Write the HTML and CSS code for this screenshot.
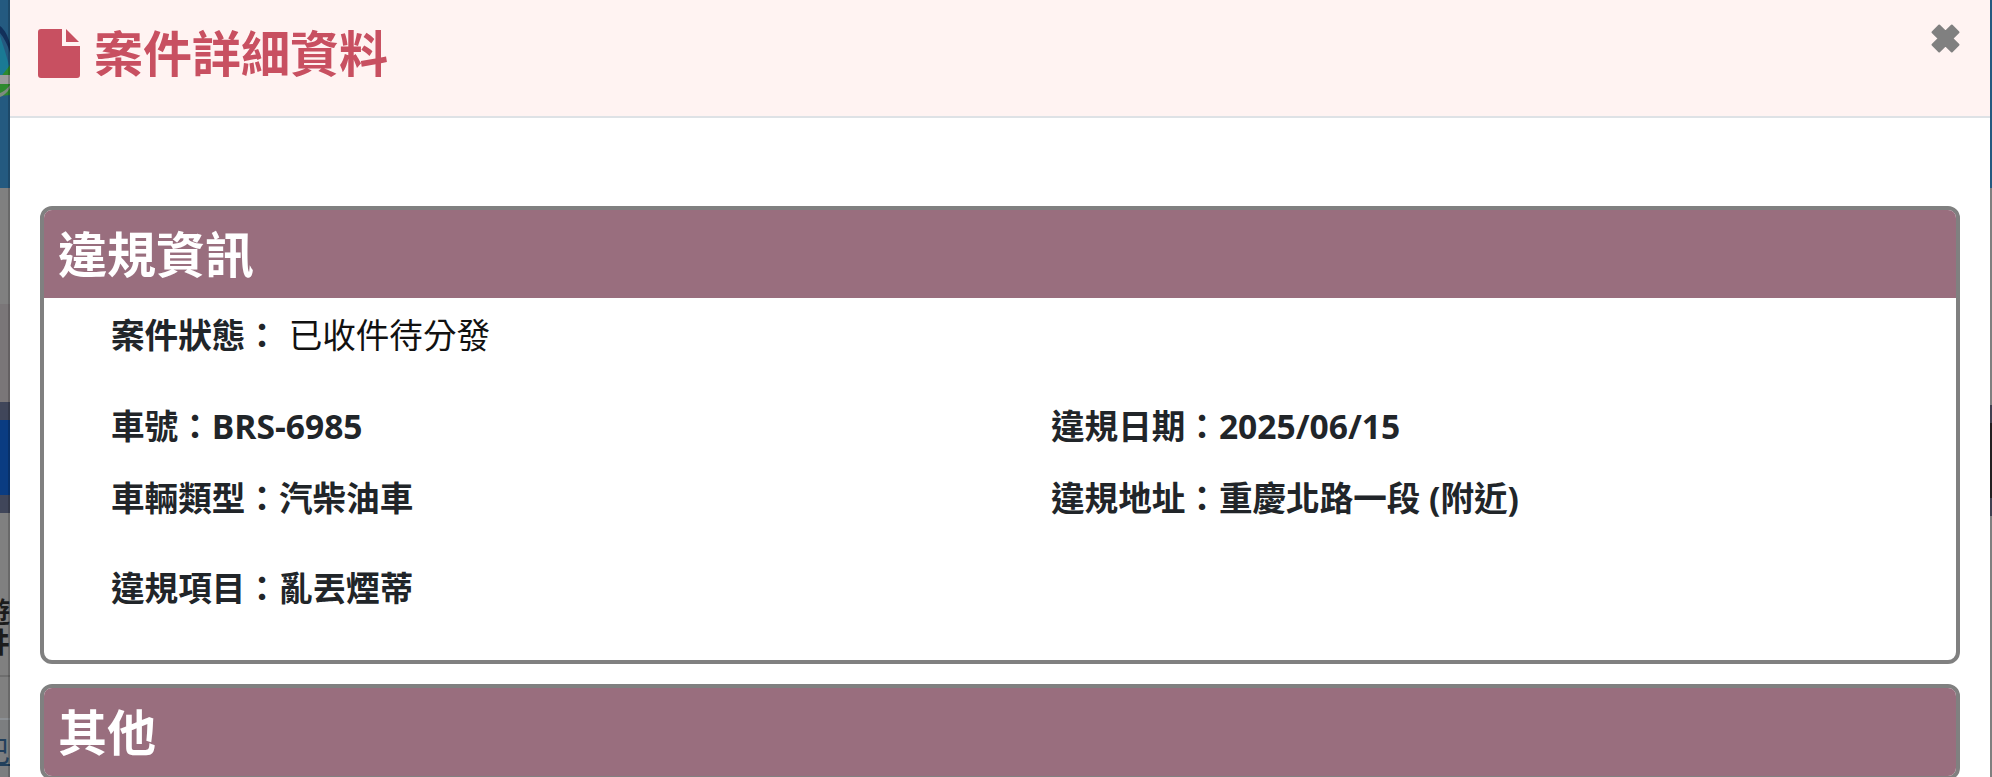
FILE: index.html
```html
<!DOCTYPE html>
<html lang="zh-Hant">
<head>
  <meta charset="UTF-8">
  <meta name="viewport" content="width=device-width, initial-scale=1.0">
  <title>案件詳細資料</title>
  <link rel="stylesheet" href="styles.css">
</head>
<body>
  <div class="strip strip-left">
    <div class="band band-blue">
      <svg class="logo-bit" width="10" height="100" viewBox="0 0 10 100">
        <path d="M0 36C4 48 8 60 10 70V72C7 82 3 90 0 96Z" fill="#1a7a95"/>
        <path d="M0 26C5 30 8 36 10 44V53C8 45 4 38 0 33Z" fill="#12305a"/>
        <path d="M10 65V95L0 96V78C3 74 7 69 10 65Z" fill="#2e8a2e"/>
        <path d="M0 75H10V84H0Z" fill="#9c9c9c"/>
        <path d="M0 93C3 92 6 90 10 85V88C7 93 3 96 0 97Z" fill="#7d8a80"/>
      </svg>
    </div>
    <div class="band band-gray"></div>
    <div class="band band-gray2"></div>
    <div class="band band-slate"></div>
    <div class="band band-navy"></div>
    <div class="band band-slate"></div>
    <div class="band band-text"><span class="clip-text">遊</span><span class="clip-text">井</span></div>
    <div class="band band-mid"></div>
    <div class="band band-link"><span class="clip-link">巴</span></div>
  </div>

  <div class="modal">
    <div class="modal-header">
      <h1 class="modal-title">
        <svg class="file-icon" viewBox="0 0 42 49">
          <path d="M3 0H24V17H42V46C42 48 41 49 39 49H3C1 49 0 48 0 46V3C0 1 1 0 3 0Z"/>
          <path d="M28 0 41 13H28Z"/>
        </svg>
        案件詳細資料
      </h1>
      <svg class="close-icon" viewBox="0 0 29 29">
        <path d="M8.200 1.500 14.500 7.800 20.800 1.500 27.500 8.200 21.200 14.500 27.500 20.800 20.800 27.500 14.500 21.200 8.200 27.500 1.500 20.800 7.800 14.500 1.500 8.200Z"/>
      </svg>
    </div>

    <div class="modal-body">
      <section class="card">
        <h2 class="card-title">違規資訊</h2>
        <div class="card-body">
          <p class="status">案件狀態： <span class="status-value">已收件待分發</span></p>
          <div class="info-grid">
            <p>車號：BRS-6985</p>
            <p>違規日期：2025/06/15</p>
            <p>車輛類型：汽柴油車</p>
            <p>違規地址：重慶北路一段 (附近)</p>
          </div>
          <p class="violation">違規項目：亂丟煙蒂</p>
        </div>
      </section>

      <section class="card">
        <h2 class="card-title">其他</h2>
      </section>
    </div>
  </div>

  <div class="strip strip-right">
    <div class="rband rband-blue"></div>
    <div class="rband rband-gray"></div>
    <div class="rband rband-slate"></div>
    <div class="rband rband-dark"></div>
    <div class="rband rband-slate"></div>
    <div class="rband rband-rest"></div>
  </div>
</body>
</html>
```
FILE: styles.css
```css
* {
  box-sizing: border-box;
}
html, body {
  margin: 0;
  height: 777px;
  overflow: hidden;
}
body {
  display: flex;
  font-family: "Open Sans", "Noto Sans CJK TC", sans-serif;
  color: #212529;
  background: #fff;
}

/* page behind the dialog, only the edges show */
.strip {
  flex: none;
  height: 777px;
  overflow: hidden;
}
.strip-left {
  width: 10px;
  position: relative;
}
.strip-left::after {
  content: "";
  position: absolute;
  top: 0;
  right: 0;
  bottom: 0;
  width: 2px;
  background: rgba(0, 0, 0, 0.18);
}
.strip-right {
  width: 2px;
}
.band-blue {
  height: 188px;
  background: #245a80;
}
.logo-bit {
  display: block;
}
.band-gray {
  height: 116px;
  background: #808080;
}
.band-gray2 {
  height: 98px;
  background: #7a7678;
}
.band-slate {
  height: 18px;
  background: #40465a;
}
.band-navy {
  height: 75px;
  background: #0a3c82;
}
.band-text {
  height: 164px;
  background: #808080;
  border-bottom: 2px solid #6e6e6e;
  padding-top: 84px;
  direction: rtl;
}
.band-mid {
  height: 43px;
  background: #808080;
  border-bottom: 2px solid #8c9094;
}
.band-link {
  height: 57px;
  background: #7c7e80;
  padding-top: 16px;
  direction: rtl;
}
.clip-text, .clip-link {
  display: block;
  width: 38px;
  height: 30px;
  margin-left: -28px;
  overflow: hidden;
  font-size: 28px;
  line-height: 30px;
}
.clip-text {
  font-weight: 700;
  color: #1c1c1c;
}
.clip-link {
  color: #22405c;
  text-decoration: underline;
}
.rband-blue {
  height: 188px;
  background: #245a80;
}
.rband-gray {
  height: 217px;
  background: #7f7f7f;
}
.rband-slate {
  height: 18px;
  background: #404050;
}
.rband-dark {
  height: 75px;
  background: #231f20;
}
.rband-rest {
  height: 261px;
  background: #7f7f7f;
}

.modal {
  flex: 1;
  min-width: 0;
  background: #fff;
}
.modal-header {
  height: 118px;
  padding: 24px 30px 0 28px;
  display: flex;
  justify-content: space-between;
  align-items: flex-start;
  background: #fff3f2;
  border-bottom: 2px solid #dee2e6;
}
.modal-title {
  margin: 0;
  display: flex;
  align-items: center;
  gap: 14px;
  font-size: 49px;
  line-height: 58px;
  font-weight: 700;
  color: #c85061;
}
.file-icon {
  width: 42px;
  height: 49px;
  fill: #c85061;
}
.close-icon {
  width: 29px;
  height: 29px;
  fill: #808080;
  stroke: #808080;
  stroke-width: 2;
  stroke-linejoin: round;
}

.modal-body {
  padding: 88px 30px 0;
}
.card {
  border: 4px solid #808080;
  border-radius: 12px;
  margin-bottom: 20px;
  overflow: hidden;
}
.card-title {
  margin: 0;
  height: 88px;
  padding: 12px 14px 0;
  font-size: 49px;
  line-height: 64px;
  font-weight: 700;
  color: #fff;
  background: #996e7e;
}
.card-body {
  height: 362px;
  padding: 0 0 0 67px;
  font-size: 33.6px;
  font-weight: 700;
  line-height: 50px;
}
.card-body p {
  margin: 0;
}
.card-body .status {
  padding-top: 12px;
}
.status-value {
  margin-left: 1px;
  font-weight: 400;
  color: #111;
}
.info-grid {
  display: grid;
  grid-template-columns: 940px 1fr;
  row-gap: 22px;
  margin-top: 41px;
}
.card-body .violation {
  margin-top: 40px;
}
```
